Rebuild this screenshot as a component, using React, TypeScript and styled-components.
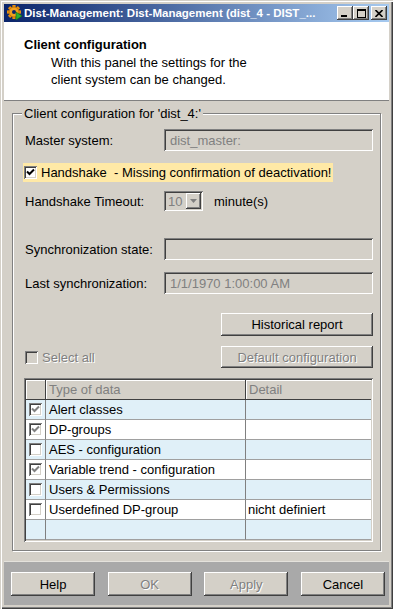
import React from "react";
import styled, { createGlobalStyle, css } from "styled-components";

const GlobalStyle = createGlobalStyle`
  html, body { margin: 0; padding: 0; background: #d4d0c8; }
  body { font-family: "Liberation Sans", Arial, sans-serif; font-size: 13px; color: #000; }
  * { box-sizing: border-box; }
`;

const raised = css`
  background: #d4d0c8;
  box-shadow: inset -1px -1px 0 #404040, inset 1px 1px 0 #fff, inset -2px -2px 0 #808080, inset 2px 2px 0 #d4d0c8;
`;

const sunken = css`
  box-shadow: inset 1px 1px 0 #808080, inset -1px -1px 0 #fff, inset 2px 2px 0 #404040, inset -2px -2px 0 #d4d0c8;
`;

const disabledText = css`
  color: #808080;
  text-shadow: 1px 1px 0 #fff;
`;

const Window = styled.div`
  width: 393px;
  height: 609px;
  padding: 4px;
  background: #d4d0c8;
  display: flex;
  flex-direction: column;
  box-shadow: inset 1px 1px 0 #d4d0c8, inset 2px 2px 0 #fff, inset -1px -1px 0 #404040, inset -2px -2px 0 #808080;
`;

const TitleBar = styled.div`
  height: 18px;
  flex: none;
  display: flex;
  align-items: center;
  padding: 0 2px 0 3px;
  background: linear-gradient(to right, #0a246a, #a6caf0);
`;

const TitleText = styled.div`
  flex: 1;
  margin-left: 1px;
  color: #fff;
  font-family: "Liberation Sans", Tahoma, sans-serif;
  font-weight: bold;
  font-size: 11.5px;
  white-space: nowrap;
  overflow: hidden;
`;

const CtrlGroup = styled.div`
  display: flex;
  align-items: center;
`;

const CtrlButton = styled.div<{ $gap?: number }>`
  ${raised};
  width: 16px;
  height: 14px;
  margin-left: ${(p) => p.$gap ?? 0}px;
  display: flex;
  align-items: center;
  justify-content: center;
`;

const Header = styled.div`
  height: 79px;
  flex: none;
  background: #fff;
  border-bottom: 1px solid #808080;
  padding: 15px 0 0 20px;
`;

const HeaderTitle = styled.div`
  font-weight: bold;
  line-height: 15px;
`;

const HeaderText = styled.div`
  margin: 2px 0 0 27px;
  line-height: 17px;
`;

const Content = styled.div`
  flex: 1;
  display: flex;
  flex-direction: column;
  padding: 12px 8px 0 8px;
`;

const GroupBox = styled.div`
  position: relative;
  border: 1px solid #808080;
  box-shadow: 1px 1px 0 #fff, inset 1px 1px 0 #fff;
  padding: 15px 7px 8px 11px;
  display: flex;
  flex-direction: column;
`;

const Legend = styled.div`
  position: absolute;
  top: -8px;
  left: 9px;
  padding: 0 2px;
  line-height: 15px;
  background: #d4d0c8;
`;

const Row = styled.div<{ $mt: number; $h: number; $between?: boolean; $end?: boolean }>`
  display: flex;
  align-items: center;
  margin-top: ${(p) => p.$mt}px;
  height: ${(p) => p.$h}px;
  justify-content: ${(p) => (p.$between ? "space-between" : p.$end ? "flex-end" : "flex-start")};
`;

const Label = styled.div`
  width: 140px;
  flex: none;
  padding-left: 1px;
`;

const Field = styled.div<{ $h?: number }>`
  ${sunken};
  flex: 1;
  height: ${(p) => p.$h ?? 22}px;
  background: #d4d0c8;
  color: #808080;
  padding: 0 4px 0 6px;
  display: flex;
  align-items: center;
`;

const Highlight = styled.label`
  display: inline-flex;
  align-items: center;
  gap: 4px;
  height: 19px;
  margin-left: -1px;
  padding: 0 2px 0 1px;
  background: #ffe9a6;
`;

const CheckBox = styled.span<{ $disabled?: boolean }>`
  ${sunken};
  width: 13px;
  height: 13px;
  flex: none;
  display: inline-flex;
  align-items: center;
  justify-content: center;
  background: ${(p) => (p.$disabled ? "#d4d0c8" : "#fff")};
`;

const Combo = styled.div`
  ${sunken};
  width: 39px;
  height: 20px;
  flex: none;
  background: #d4d0c8;
  color: #808080;
  display: flex;
  align-items: center;
  padding: 2px 2px 2px 4px;
`;

const ComboValue = styled.span`
  flex: 1;
`;

const ComboButton = styled.div`
  ${raised};
  width: 15px;
  height: 16px;
  display: flex;
  align-items: center;
  justify-content: center;
`;

const Unit = styled.span`
  margin-left: 11px;
`;

const Button = styled.div<{ $w: number; $h: number; $disabled?: boolean }>`
  ${raised};
  width: ${(p) => p.$w}px;
  height: ${(p) => p.$h}px;
  flex: none;
  display: flex;
  align-items: center;
  justify-content: center;
  ${(p) => (p.$disabled ? disabledText : "color: #000;")}
`;

const CheckLabel = styled.label<{ $disabled?: boolean }>`
  display: inline-flex;
  align-items: center;
  gap: 4px;
  padding-left: 1px;
  span + span {
    ${(p) => (p.$disabled ? disabledText : "")}
  }
`;

const Table = styled.div`
  ${sunken};
  margin-top: 10px;
  height: 164px;
  padding: 2px;
  background: #fff;
  display: grid;
  grid-template-columns: 20px 200px 1fr;
  grid-auto-rows: 20px;
`;

const HeadCell = styled.div<{ $last?: boolean }>`
  background: #d4d0c8;
  color: #808080;
  border-bottom: 1px solid #404040;
  border-right: ${(p) => (p.$last ? "none" : "1px solid #404040")};
  box-shadow: inset 1px 1px 0 #fff;
  padding-left: 3px;
  display: flex;
  align-items: center;
`;

const Cell = styled.div<{ $alt: boolean; $last?: boolean; $center?: boolean; $pl?: number }>`
  background: ${(p) => (p.$alt ? "#e0f0f8" : "#fff")};
  border-bottom: 1px solid #a0a0a0;
  border-right: ${(p) => (p.$last ? "none" : "1px solid #808080")};
  display: flex;
  align-items: center;
  justify-content: ${(p) => (p.$center ? "center" : "flex-start")};
  padding-left: ${(p) => p.$pl ?? 0}px;
  white-space: nowrap;
  overflow: hidden;
`;

const BottomBar = styled.div`
  margin-top: auto;
  height: 44px;
  flex: none;
  background: #a9a9a9;
  border-top: 1px solid #e4e2dc;
  display: flex;
  justify-content: space-between;
  align-items: flex-start;
  padding: 10px 4px 0 7px;
`;

const Check = ({ color = "#000" }: { color?: string }) => (
  <svg width="9" height="9" viewBox="0 0 9 9">
    <path d="M1 3.5 L3.5 6 L8 1.5" fill="none" stroke={color} strokeWidth="2" />
  </svg>
);

const AppIcon = () => (
  <svg width="16" height="16" viewBox="0 0 16 16">
    <g transform="translate(7 7)">
      {[0, 45, 90, 135].map((a) => (
        <rect key={a} x="-1.6" y="-7" width="3.2" height="14" fill="#e8900c" transform={`rotate(${a})`} />
      ))}
      <circle r="5" fill="#f0a020" stroke="#b86a00" strokeWidth="0.8" />
      <circle r="2" fill="#0a246a" />
    </g>
    <path d="M9 7 L15 11 L9 15 Z" fill="#2fb02f" stroke="#0f6f0f" strokeWidth="0.6" />
  </svg>
);

const rows: { checked: boolean; name: string; detail: string }[] = [
  { checked: true, name: "Alert classes", detail: "" },
  { checked: true, name: "DP-groups", detail: "" },
  { checked: false, name: "AES - configuration", detail: "" },
  { checked: true, name: "Variable trend - configuration", detail: "" },
  { checked: false, name: "Users & Permissions", detail: "" },
  { checked: false, name: "Userdefined DP-group", detail: "nicht definiert" },
];

export default function App() {
  return (
    <>
      <GlobalStyle />
      <Window>
        <TitleBar>
          <AppIcon />
          <TitleText>Dist-Management: Dist-Management (dist_4 - DIST_...</TitleText>
          <CtrlGroup>
            <CtrlButton>
              <svg width="8" height="7" viewBox="0 0 8 7">
                <rect x="0" y="5" width="6" height="2" fill="#000" />
              </svg>
            </CtrlButton>
            <CtrlButton>
              <svg width="9" height="9" viewBox="0 0 9 9">
                <rect x="0.5" y="0.5" width="8" height="8" fill="none" stroke="#000" />
                <rect x="0" y="1" width="9" height="1" fill="#000" />
              </svg>
            </CtrlButton>
            <CtrlButton $gap={2}>
              <svg width="8" height="7" viewBox="0 0 8 7">
                <path d="M0.5 0 L7.5 7 M7.5 0 L0.5 7" stroke="#000" strokeWidth="1.6" />
              </svg>
            </CtrlButton>
          </CtrlGroup>
        </TitleBar>
        <Header>
          <HeaderTitle>Client configuration</HeaderTitle>
          <HeaderText>
            With this panel the settings for the
            <br />
            client system can be changed.
          </HeaderText>
        </Header>
        <Content>
          <GroupBox>
            <Legend>Client configuration for 'dist_4:'</Legend>
            <Row $mt={0} $h={22}>
              <Label>Master system:</Label>
              <Field>dist_master:</Field>
            </Row>
            <Row $mt={12} $h={19}>
              <Highlight>
                <CheckBox>
                  <Check />
                </CheckBox>
                <span>Handshake&nbsp; - Missing confirmation of deactivation!</span>
              </Highlight>
            </Row>
            <Row $mt={8} $h={22}>
              <Label>Handshake Timeout:</Label>
              <Combo>
                <ComboValue>10</ComboValue>
                <ComboButton>
                  <svg width="7" height="4" viewBox="0 0 7 4">
                    <path d="M0 0 H7 L3.5 4 Z" fill="#808080" />
                  </svg>
                </ComboButton>
              </Combo>
              <Unit>minute(s)</Unit>
            </Row>
            <Row $mt={26} $h={22}>
              <Label>Synchronization state:</Label>
              <Field />
            </Row>
            <Row $mt={12} $h={22}>
              <Label>Last synchronization:</Label>
              <Field>1/1/1970 1:00:00 AM</Field>
            </Row>
            <Row $mt={19} $h={23} $end>
              <Button $w={152} $h={23}>Historical report</Button>
            </Row>
            <Row $mt={10} $h={22} $between>
              <CheckLabel $disabled>
                <CheckBox $disabled />
                <span>Select all</span>
              </CheckLabel>
              <Button $w={152} $h={22} $disabled>
                Default configuration
              </Button>
            </Row>
            <Table>
              <HeadCell />
              <HeadCell>Type of data</HeadCell>
              <HeadCell $last>Detail</HeadCell>
              {rows.map((r, i) => (
                <React.Fragment key={r.name}>
                  <Cell $alt={i % 2 === 0} $center>
                    <CheckBox>{r.checked && <Check color="#808080" />}</CheckBox>
                  </Cell>
                  <Cell $alt={i % 2 === 0} $pl={3}>
                    {r.name}
                  </Cell>
                  <Cell $alt={i % 2 === 0} $last $pl={2}>
                    {r.detail}
                  </Cell>
                </React.Fragment>
              ))}
              <Cell $alt />
              <Cell $alt />
              <Cell $alt $last />
            </Table>
          </GroupBox>
        </Content>
        <BottomBar>
          <Button $w={84} $h={24}>Help</Button>
          <Button $w={84} $h={24} $disabled>
            OK
          </Button>
          <Button $w={84} $h={24} $disabled>
            Apply
          </Button>
          <Button $w={84} $h={24}>Cancel</Button>
        </BottomBar>
      </Window>
    </>
  );
}
